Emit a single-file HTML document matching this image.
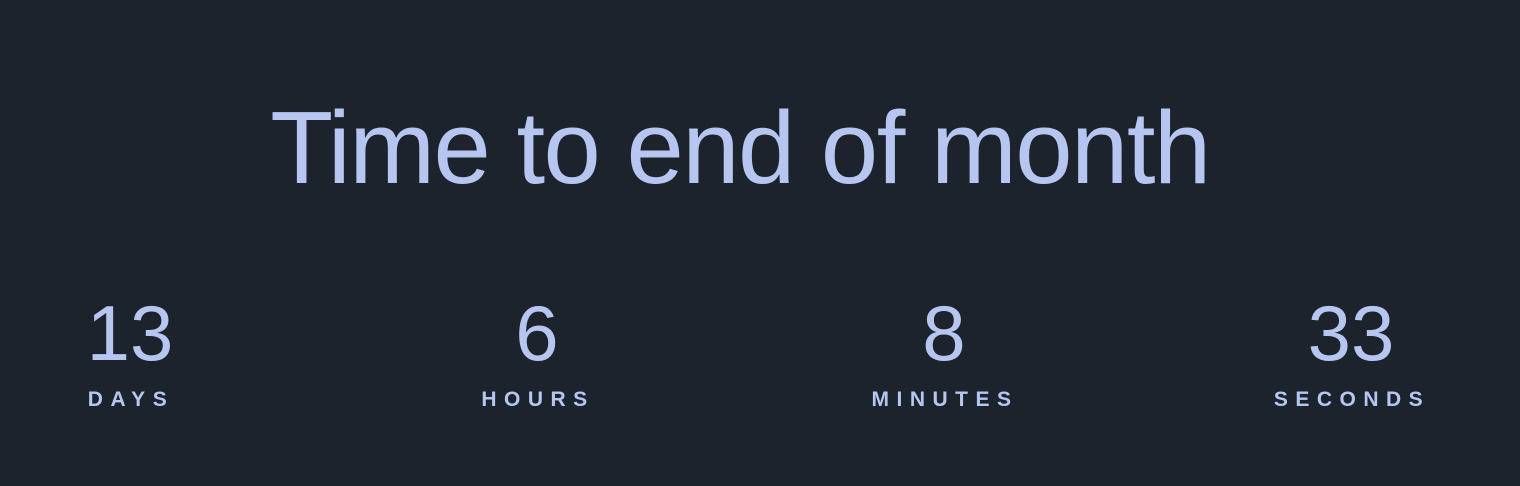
<!DOCTYPE html>
<html><head><style>
html,body{margin:0;padding:0;}
body{width:1520px;height:486px;background:#1c232c;overflow:hidden;position:relative;font-family:"Liberation Sans",sans-serif;color:#b6c6f1;}
.t{position:absolute;left:-20px;width:1520px;top:88px;text-align:center;font-size:103px;font-weight:300;line-height:120px;letter-spacing:-1.5px;}
.n{position:absolute;top:288px;font-size:78px;line-height:90px;width:400px;text-align:center;}
.l{position:absolute;top:387px;font-size:21px;line-height:26px;letter-spacing:7.5px;width:400px;text-align:center;font-weight:bold;}
</style></head><body>
<div class="t">Time to end of month</div>
<div class="n" style="left:-70px">13</div><div class="l" style="left:-69px">DAYS</div>
<div class="n" style="left:337px">6</div><div class="l" style="left:338px">HOURS</div>
<div class="n" style="left:744px">8</div><div class="l" style="left:745px">MINUTES</div>
<div class="n" style="left:1151px">33</div><div class="l" style="left:1152px">SECONDS</div>
</body></html>
